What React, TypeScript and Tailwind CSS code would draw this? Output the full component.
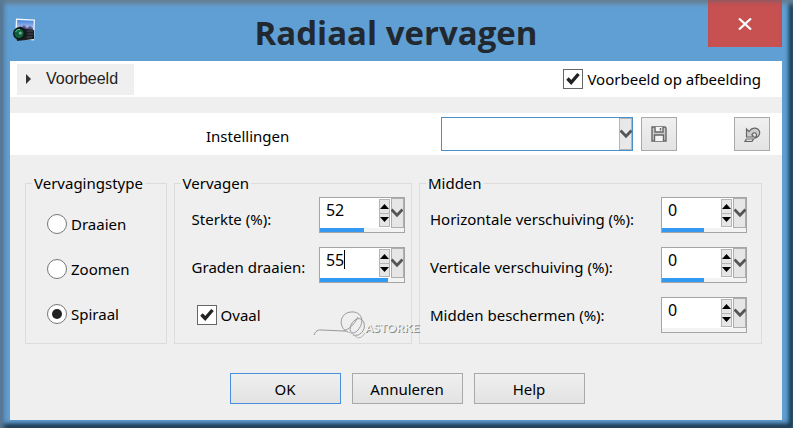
import { useState } from "react";
import type { ReactNode } from "react";

const Chevron = () => (
  <svg viewBox="0 0 12 10" className="w-3 h-[10px] shrink-0" fill="none" stroke="#555" strokeWidth="2.8">
    <path d="M0.5 1.5 6 7.3 11.5 1.5" />
  </svg>
);

const Tick = () => (
  <svg viewBox="0 0 20 20" className="absolute inset-0 w-5 h-5 pointer-events-none hidden peer-checked:block" fill="none" stroke="#222" strokeWidth="3.4">
    <path d="M4.5 9.500 8.2 13.500 15.5 5" />
  </svg>
);

const CheckBox = ({ label }: { label: string }) => (
  <label className="flex items-center gap-1 h-6">
    <span className="relative w-5 h-5">
      <input type="checkbox" defaultChecked className="peer appearance-none block w-5 h-5 border border-[#666] bg-white" />
      <Tick />
    </span>
    {label}
  </label>
);

const Group = ({ title, children }: { title: string; children: ReactNode }) => (
  <fieldset className="min-w-0 border border-[#dcdcdc] h-[173px]">
    <legend className="ml-[6px] px-[2px] leading-6">{title}</legend>
    {children}
  </fieldset>
);

type SpinProps = { id: string; start: number; min?: number; max?: number; fill: number; caret?: boolean };

// number box with arrows, drop button and the value bar underneath
const SpinField = ({ id, start, min = 0, max = 100, fill, caret }: SpinProps) => {
  const [value, setValue] = useState(start);
  const step = (d: number) => setValue((v) => Math.min(max, Math.max(min, v + d)));
  const width = Math.min(100, fill + ((value - start) * 100) / (max - min));

  return (
    <div className="w-[86px] h-9 border border-[#a5a5a5] bg-white flex flex-col">
      <div className="flex-1 min-h-0 flex">
        <div className="relative flex-1 min-w-0">
          <input
            id={id}
            value={value}
            onChange={(e) => setValue(Number(e.target.value) || 0)}
            className="block w-full h-[23px] pl-[6px] text-[16px] bg-transparent outline-none"
          />
          {caret && <span className="absolute left-6 top-[2px] w-px h-[19px] bg-black" />}
        </div>
        <div className="flex flex-col w-[11px] my-px border border-[#b5b5b5] bg-[#e6e6e6]">
          <button type="button" aria-label="Omhoog" onClick={() => step(1)} className="flex-1 flex items-center justify-center border-b border-[#b5b5b5]">
            <svg viewBox="0 0 9 5" className="w-[9px] h-[5px] shrink-0"><path d="M0 5 4.5 0 9 5z" /></svg>
          </button>
          <button type="button" aria-label="Omlaag" onClick={() => step(-1)} className="flex-1 flex items-center justify-center">
            <svg viewBox="0 0 9 5" className="w-[9px] h-[5px] shrink-0"><path d="M0 0 4.5 5 9 0z" /></svg>
          </button>
        </div>
        <button type="button" aria-label="Schuif" className="w-[13px] ml-px border border-[#adadad] bg-[#e6e6e6] flex items-center justify-center">
          <Chevron />
        </button>
      </div>
      <div className="h-1 shrink-0 bg-[#f3f3f3]">
        <div className="h-full bg-[#3399f3]" style={{ width: `${width}%` }} />
      </div>
    </div>
  );
};

const CameraIcon = () => (
  <svg viewBox="0 0 24 24" className="w-6 h-6">
    <defs>
      <linearGradient id="sky" x1="0" y1="0" x2="0" y2="1">
        <stop offset="0" stopColor="#3d86dc" />
        <stop offset="0.55" stopColor="#c9c4ee" />
        <stop offset="1" stopColor="#4c4a66" />
      </linearGradient>
    </defs>
    <path d="M4 0.500 23 1.500 22 22.500 3 20z" fill="#eef6fb" />
    <path d="M5.200 2 21.700 2.800 21 19 5 18z" fill="url(#sky)" />
    <path d="M6 11l2-3 2 1 2-2 3 3 3-2 3 2v4H6z" fill="#5c5c94" />
    <path d="M4 12l5-3 5 2 3 0 5 1v9l-8 1-9 1z" fill="#1d1f24" />
    <path d="M15 13h6M16 16h5M15 19h5" stroke="#4b4d55" />
    <circle cx="7.500" cy="15.500" r="6.500" fill="#101a18" />
    <circle cx="7" cy="15.500" r="4.600" fill="#12603f" />
    <path d="M3.500 14q1-3 4.500-2.500" stroke="#4fcf8b" fill="none" />
    <circle cx="8.300" cy="15" r="1.500" fill="#7fae9c" />
  </svg>
);

const toolButton = "w-9 h-[34px] border border-[#a9a9a9] bg-linear-to-b from-[#f0f0f0] to-[#e3e3e3] flex items-center justify-center";
const dialogButton = "w-[111px] h-[31px] border bg-linear-to-b from-[#f0f0f0] to-[#e2e2e2]";

export default function App() {
  const [type, setType] = useState("Spiraal");

  return (
    <div className="min-h-screen flex flex-col pl-[10px] pr-[11px] pb-2 bg-[#609fd3] text-black text-[15px] leading-6 font-['Noto_Sans','Open_Sans',sans-serif] shadow-[inset_5px_0_5px_-1px_#587894,inset_0_5px_5px_-1px_#6c8698,inset_-4px_0_4px_0_#12344d,inset_0_-4px_5px_0_#12293b]">
      <header className="relative h-[61px] flex items-center justify-center">
        <span className="absolute left-[2px] top-[18px]"><CameraIcon /></span>
        <h1 className="pt-1 text-[33px] leading-10 font-bold text-[#22282f] font-['Open_Sans',sans-serif]">Radiaal vervagen</h1>
        <button type="button" aria-label="Sluiten" className="absolute right-0 top-0 w-[74px] h-[47px] bg-[#c75050] flex items-center justify-center shadow-[inset_0_4px_4px_-2px_#8a5a62]">
          <svg viewBox="0 0 14 12" className="w-[14px] h-3" stroke="#fff" strokeWidth="2.2"><path d="M1 0.500 13 11.500M13 0.500 1 11.500" /></svg>
        </button>
      </header>

      <main className="flex-1 bg-[#efefef]">
        <div className="h-9 pl-[7px] pr-[21px] bg-white flex items-center justify-between">
          <button type="button" className="w-[117px] h-[31px] pl-[9px] bg-[#efefef] text-[#222] text-[16px] flex items-center gap-[15px] font-['Liberation_Sans',sans-serif]">
            <svg viewBox="0 0 5 10" className="w-[5px] h-[10px]" fill="#333"><path d="M0 0 5 5 0 10z" /></svg>
            Voorbeeld
          </button>
          <CheckBox label="Voorbeeld op afbeelding" />
        </div>

        <div className="mt-4 h-[42px] pr-[12px] bg-white flex items-center">
          <label htmlFor="preset" className="flex-1 pl-[196px] pt-1">Instellingen</label>
          <div className="relative w-48 mr-2">
            <select id="preset" className="appearance-none block w-full h-[34px] border border-[#4a90c8] bg-white outline-none">
              <option></option>
            </select>
            <span className="absolute right-px top-px bottom-px w-[13px] border border-[#b5b5b5] bg-[#e8e8e8] flex items-center justify-center pointer-events-none">
              <Chevron />
            </span>
          </div>
          <button type="button" aria-label="Opslaan" className={toolButton}>
            <svg viewBox="0 0 16 16" className="w-4 h-4" fill="none" stroke="#666" strokeWidth="1.4">
              <path d="M1 1h13l1 1v13H1z" fill="#ccc" />
              <path d="M4 1v5h8V1M3.500 15V9h9v6" fill="#f5f5f5" />
              <path d="M9.500 2v2.500" />
            </svg>
          </button>
          <button type="button" aria-label="Herstellen" className={`${toolButton} ml-[57px]`}>
            <svg viewBox="0 0 17 15" className="w-[17px] h-[15px]" fill="#ccc" stroke="#666" strokeWidth="1.2">
              <path d="M2.500 2v8H10L7.800 7.700Q10 4.500 12 6.500 13.500 8.500 10.500 11.500 16 9.500 15.700 5 14.500 1 10 1.200 7 1.500 5 4.500z" />
              <path d="M2.500 12h7L8 14.300H1z" fill="#fff" />
            </svg>
          </button>
        </div>

        <div className="relative mt-4 pl-[15px] pr-[20px] grid grid-cols-[142fr_239fr_344fr] gap-[7px]">
          <Group title="Vervagingstype">
            <div className="pl-[21px] pt-[17px] flex flex-col gap-[21px]">
              {["Draaien", "Zoomen", "Spiraal"].map((name) => (
                <label key={name} className="flex items-center gap-1">
                  <span className="relative w-5 h-5 shrink-0">
                    <input
                      type="radio"
                      name="type"
                      checked={type === name}
                      onChange={() => setType(name)}
                      className="peer appearance-none block w-5 h-5 rounded-full border border-[#777] bg-white"
                    />
                    <span className="absolute inset-[5px] rounded-full bg-[#222] hidden peer-checked:block" />
                  </span>
                  {name}
                </label>
              ))}
            </div>
          </Group>

          <Group title="Vervagen">
            <div className="pl-[17px] pr-[6px] flex justify-between">
              <div className="pt-3 flex flex-col gap-6">
                <label htmlFor="strength">Sterkte (%):</label>
                <label htmlFor="degrees" className="whitespace-nowrap">Graden draaien:</label>
                <div className="pl-[5px]"><CheckBox label="Ovaal" /></div>
              </div>
              <div className="flex flex-col gap-[14px] pt-[2px]">
                <SpinField id="strength" start={52} fill={53} />
                <SpinField id="degrees" start={55} fill={81} caret />
              </div>
            </div>
          </Group>

          <Group title="Midden">
            <div className="pl-[10px] pr-[14px] flex justify-between">
              <div className="pt-3 flex flex-col gap-6 whitespace-nowrap">
                <label htmlFor="horizontal">Horizontale verschuiving (%):</label>
                <label htmlFor="vertical">Verticale verschuiving (%):</label>
                <label htmlFor="protect">Midden beschermen (%):</label>
              </div>
              <div className="flex flex-col gap-[14px] pt-[2px]">
                <SpinField id="horizontal" start={0} min={-100} fill={50} />
                <SpinField id="vertical" start={0} min={-100} fill={50} />
                <SpinField id="protect" start={0} fill={0} />
              </div>
            </div>
          </Group>

          {/* signature stamped over the groups */}
          <svg viewBox="0 0 114 32" className="absolute left-[302px] top-[139px] w-[114px] h-8 pointer-events-none" fill="none">
            <g stroke="#999">
              <path d="M2 25Q4 19 10 20L31 21Q40 19 46 7" />
              <path d="M36 22C26 18 27 3 39 2 50 1 53 12 46 20 41 26 36 22 39 15 42 8 50 6 52 13 54 21 47 27 41 25" />
              <path d="M31 21Q40 22 43 26 48 31 53 23" stroke="#b5b5b5" />
            </g>
            <text x="54" y="23" fontSize="12" fontWeight="bold" fontFamily="Lato, sans-serif" fill="#8a8a8a">ASTORKE</text>
            <text x="53" y="22" fontSize="12" fontWeight="bold" fontFamily="Lato, sans-serif" fill="#f2f2f2">ASTORKE</text>
          </svg>
        </div>

        <div className="mt-[29px] mb-[15px] pl-[22px] flex justify-center gap-[11px]">
          <button type="button" className={`${dialogButton} border-[#4a8fdb]`}>OK</button>
          <button type="button" className={`${dialogButton} border-[#a9a9a9]`}>Annuleren</button>
          <button type="button" className={`${dialogButton} border-[#a9a9a9]`}>Help</button>
        </div>
      </main>
    </div>
  );
}
